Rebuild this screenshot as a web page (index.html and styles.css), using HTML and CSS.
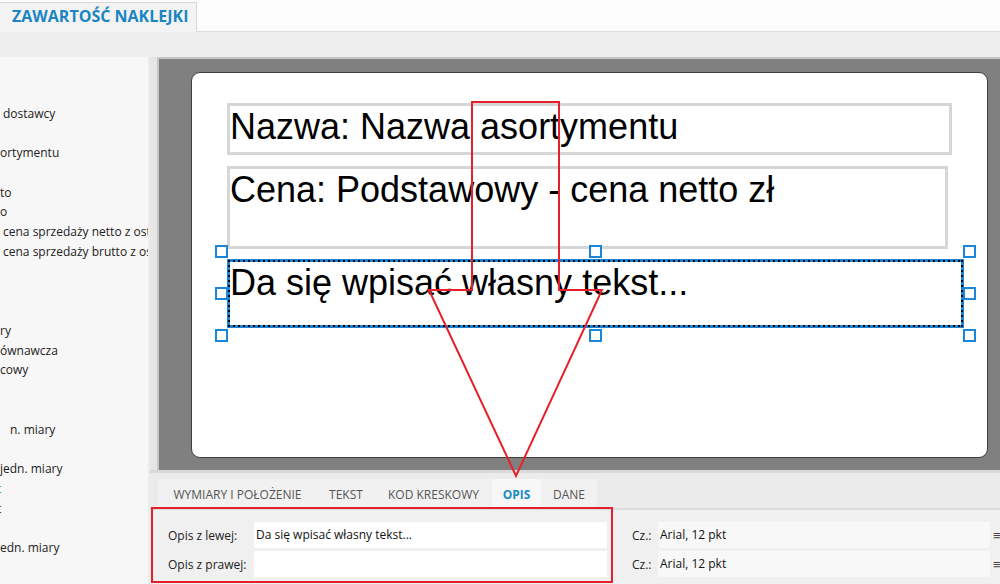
FILE: index.html
```html
<!DOCTYPE html>
<html lang="pl">
<head>
  <meta charset="UTF-8">
  <meta name="viewport" content="width=device-width, initial-scale=1.0">
  <title>Zawartość naklejki</title>
  <link rel="stylesheet" href="styles.css">
</head>
<body>
  <div class="topbar">
    <div class="main-tab">ZAWARTOŚĆ NAKLEJKI</div>
  </div>

  <div class="workspace">
    <!-- lista pól (przewinięta w prawo) -->
    <aside class="fields">
      <div class="row"></div>
      <div class="row"></div>
      <div class="row ind">dostawcy</div>
      <div class="row"></div>
      <div class="row">ortymentu</div>
      <div class="row"></div>
      <div class="row">to</div>
      <div class="row">o</div>
      <div class="row ind">cena sprzedaży netto z ostatniej dostawy</div>
      <div class="row ind">cena sprzedaży brutto z ostatniej dostawy</div>
      <div class="row"></div>
      <div class="row"></div>
      <div class="row"></div>
      <div class="row">ry</div>
      <div class="row">ównawcza</div>
      <div class="row">cowy</div>
      <div class="row"></div>
      <div class="row"></div>
      <div class="row ind-wide">n. miary</div>
      <div class="row"></div>
      <div class="row">jedn. miary</div>
      <div class="row"><span class="cut link">t</span></div>
      <div class="row"><span class="cut">t</span></div>
      <div class="row"></div>
      <div class="row">edn. miary</div>
    </aside>

    <section class="editor">
      <div class="designer">
        <div class="splitter"></div>
        <div class="canvas">
          <div class="label">
            <div class="element el-name">Nazwa: Nazwa asortymentu</div>
            <div class="element el-price">Cena: Podstawowy - cena netto zł</div>
            <div class="element el-desc selected">
              Da się wpisać własny tekst...
              <span class="handle h-tl"></span>
              <span class="handle h-tc"></span>
              <span class="handle h-tr"></span>
              <span class="handle h-ml"></span>
              <span class="handle h-mr"></span>
              <span class="handle h-bl"></span>
              <span class="handle h-bc"></span>
              <span class="handle h-br"></span>
            </div>
          </div>
        </div>
      </div>

      <div class="prop-tabs">
        <div class="tab tab-size">WYMIARY I POŁOŻENIE</div>
        <div class="tab tab-text">TEKST</div>
        <div class="tab tab-code">KOD KRESKOWY</div>
        <div class="tab tab-desc active">OPIS</div>
        <div class="tab tab-data">DANE</div>
      </div>

      <div class="props">
        <div class="prop-label">Opis z lewej:</div>
        <div class="field">Da się wpisać własny tekst...</div>
        <div></div>
        <div class="prop-label">Cz.:</div>
        <div class="field font">Arial, 12 pkt</div>
        <div class="font-btn">≡</div>

        <div class="prop-label">Opis z prawej:</div>
        <div class="field"></div>
        <div></div>
        <div class="prop-label">Cz.:</div>
        <div class="field font">Arial, 12 pkt</div>
        <div class="font-btn">≡</div>
      </div>
    </section>
  </div>

  <!-- adnotacje na zrzucie -->
  <svg class="annotation" width="1000" height="584" viewBox="0 0 1000 584">
    <polygon points="472,102 559,102 559,290 602,290 516,476 429,290 472,290" />
    <rect x="152" y="508" width="460" height="74" />
  </svg>
</body>
</html>
```

FILE: styles.css
```css
* {
  margin: 0;
  padding: 0;
  box-sizing: border-box;
}
body {
  font-family: 'Open Sans', 'Noto Sans', Arial, sans-serif;
  background: #eeeeee;
  color: #222;
  width: 1000px;
  height: 584px;
  overflow: hidden;
  position: relative;
}
.topbar {
  height: 32px;
  background: #fcfcfc;
  border-bottom: 1px solid #dedede;
  padding-top: 2px;
}
.main-tab {
  width: 197px;
  height: 30px;
  background: #f3f3f3;
  border: 1px solid #d8d8d8;
  border-left: none;
  border-bottom: none;
  color: #1a85c2;
  font-size: 16px;
  font-weight: 700;
  line-height: 27px;
  padding-left: 12px;
}
.workspace {
  display: flex;
  margin-top: 25px;
  height: 527px;
}
.fields {
  flex: 0 0 150px;
  background: #f7f7f7;
  border-right: 2px solid #ececec;
  padding-top: 7px;
  font-size: 12px;
  color: #222;
  overflow: hidden;
}
.fields .row {
  height: 19.77px;
  line-height: 19.77px;
  white-space: nowrap;
  overflow: hidden;
}
.fields .ind {
  padding-left: 3px;
}
.fields .ind-wide {
  padding-left: 10px;
}
.fields .cut {
  margin-left: -3px;
}
.fields .link {
  color: #1a85c2;
}
.editor {
  flex: 1;
  display: flex;
  flex-direction: column;
  min-width: 0;
}
.designer {
  display: flex;
  height: 413px;
}
.splitter {
  flex: 0 0 7px;
  background: #e6e6e6;
}
.canvas {
  flex: 1;
  background: #808080;
  border-top: 2px solid #c6c6c6;
  border-left: 2px solid #c6c6c6;
  padding: 13px 0 0 32px;
}
.label {
  width: 797px;
  height: 386px;
  background: #fff;
  border: 1px solid #3e3e3e;
  border-radius: 9px;
  padding: 30px 0 0 35px;
}
.element {
  border: 3px solid #d6d6d6;
  font-family: 'Liberation Sans', Arial, sans-serif;
  font-size: 36px;
  line-height: 41px;
  color: #000;
  white-space: nowrap;
}
.el-name {
  width: 725px;
  height: 52px;
  margin-bottom: 11px;
}
.el-price {
  width: 721px;
  height: 83px;
  margin-bottom: 10px;
}
.el-desc {
  width: 737px;
  height: 69px;
}
.selected {
  position: relative;
  border-color: #1784d8;
}
.selected::before {
  content: '';
  position: absolute;
  inset: -2px;
  background:
    repeating-linear-gradient(90deg, #000 0 2px, transparent 2px 5px) left top / 100% 2px no-repeat,
    repeating-linear-gradient(90deg, #000 0 2px, transparent 2px 5px) left bottom / 100% 2px no-repeat,
    repeating-linear-gradient(180deg, #000 0 2px, transparent 2px 5px) left top / 2px 100% no-repeat,
    repeating-linear-gradient(180deg, #000 0 2px, transparent 2px 5px) right top / 2px 100% no-repeat;
}
.handle {
  position: absolute;
  width: 13px;
  height: 13px;
  background: #fff;
  border: 2px solid #1a86d9;
}
.h-tl { left: -15px; top: -17px; }
.h-tc { left: calc(50% - 6.5px); top: -17px; }
.h-tr { right: -15px; top: -17px; }
.h-ml { left: -15px; top: calc(50% - 6.5px); }
.h-mr { right: -15px; top: calc(50% - 6.5px); }
.h-bl { left: -15px; bottom: -17px; }
.h-bc { left: calc(50% - 6.5px); bottom: -17px; }
.h-br { right: -15px; bottom: -17px; }

.prop-tabs {
  display: flex;
  height: 40px;
  padding: 6px 0 0 8px;
  background: #ebebeb;
  border-top: 3px solid #d9d9d9;
  border-bottom: 2px solid #dcdcdc;
}
.tab {
  height: 29px;
  line-height: 31px;
  text-align: center;
  font-size: 12px;
  color: #555;
  background: #f1f1f1;
}
.tab-size { width: 159px; }
.tab-text { width: 58px; }
.tab-code { width: 117px; }
.tab-desc { width: 49px; }
.tab-data { width: 56px; }
.tab.active {
  color: #1a8ac4;
  font-weight: 700;
  background: #f7f7f7;
}
.props {
  flex: 1;
  display: grid;
  grid-template-columns: 86px 353px 25px 26px 332px 20px;
  grid-auto-rows: 26px;
  row-gap: 3px;
  padding: 12px 0 0 18px;
  background: #f0f0f0;
  font-size: 12px;
  align-items: center;
}
.prop-label {
  color: #222;
}
.field {
  height: 26px;
  line-height: 26px;
  background: #fff;
  padding-left: 2px;
  color: #111;
}
.field.font {
  background: #f8f8f8;
}
.font-btn {
  padding-left: 3px;
  color: #444;
  font-size: 13px;
}
.annotation {
  position: absolute;
  top: 0;
  left: 0;
  pointer-events: none;
}
.annotation polygon,
.annotation rect {
  fill: none;
  stroke: #e6202a;
  stroke-width: 2;
}
```
